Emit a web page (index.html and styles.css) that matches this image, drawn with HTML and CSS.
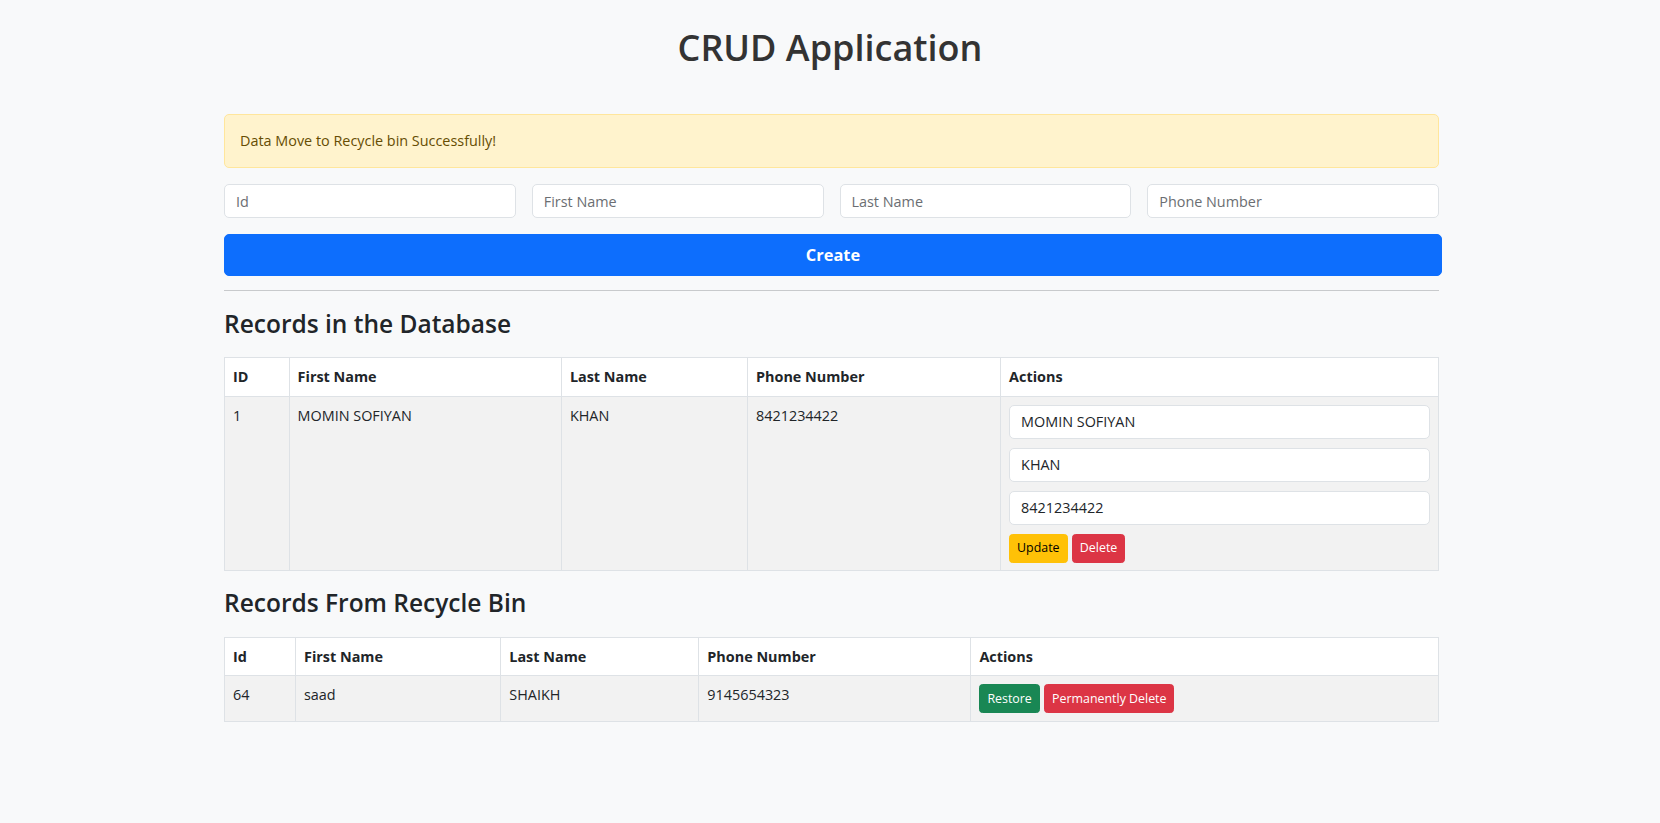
FILE: index.html
```html
<!DOCTYPE html>
<html lang="en">
<head>
<meta charset="utf-8">
<title>CRUD Application</title>
<link rel="stylesheet" href="styles.css">
</head>
<body>
<div class="page">
  <h1 class="title">CRUD Application</h1>
  <div class="container">
    <div class="alert">Data Move to Recycle bin Successfully!</div>
    <div class="form-row">
      <input class="field" type="text" placeholder="Id">
      <input class="field" type="text" placeholder="First Name">
      <input class="field" type="text" placeholder="Last Name">
      <input class="field" type="text" placeholder="Phone Number">
    </div>
    <button class="btn-create">Create</button>
    <hr class="divider">
    <h3 class="section-title">Records in the Database</h3>
    <table class="table">
      <colgroup>
        <col class="c1-id"><col class="c1-first"><col class="c1-last"><col class="c1-phone"><col class="c1-actions">
      </colgroup>
      <thead>
        <tr><th>ID</th><th>First Name</th><th>Last Name</th><th>Phone Number</th><th>Actions</th></tr>
      </thead>
      <tbody>
        <tr>
          <td>1</td>
          <td>MOMIN SOFIYAN</td>
          <td>KHAN</td>
          <td>8421234422</td>
          <td>
            <div class="edit-stack">
              <input class="field edit" type="text" value="MOMIN SOFIYAN">
              <input class="field edit" type="text" value="KHAN">
              <input class="field edit" type="text" value="8421234422">
              <div class="btn-row">
                <button class="btn-sm btn-warning">Update</button>
                <button class="btn-sm btn-danger">Delete</button>
              </div>
            </div>
          </td>
        </tr>
      </tbody>
    </table>
    <h3 class="section-title second">Records From Recycle Bin</h3>
    <table class="table">
      <colgroup>
        <col class="c2-id"><col class="c2-first"><col class="c2-last"><col class="c2-phone"><col class="c2-actions">
      </colgroup>
      <thead>
        <tr><th>Id</th><th>First Name</th><th>Last Name</th><th>Phone Number</th><th>Actions</th></tr>
      </thead>
      <tbody>
        <tr>
          <td>64</td>
          <td>saad</td>
          <td>SHAIKH</td>
          <td>9145654323</td>
          <td>
            <div class="btn-row">
              <button class="btn-sm btn-success">Restore</button>
              <button class="btn-sm btn-danger">Permanently Delete</button>
            </div>
          </td>
        </tr>
      </tbody>
    </table>
  </div>
</div>
</body>
</html>
```
FILE: styles.css
```css
* { box-sizing: border-box; }

html, body {
  margin: 0;
  padding: 0;
  background: #f8f9fa;
}

body {
  font-family: "Open Sans", "Noto Sans", sans-serif;
  font-size: 14.4px;
  line-height: 21.6px;
  color: #212529;
}

.page {
  padding-top: 26px;
  padding-bottom: 60px;
}

.title {
  margin: 0;
  text-align: center;
  font-size: 36px;
  line-height: 44px;
  font-weight: 600;
  color: #333333;
}

.container {
  width: 1218px;
  margin: 44px auto 0;
  padding-left: 3px;
}

.alert {
  height: 54px;
  padding: 15.2px 15px;
  background: #fff3cd;
  border: 1px solid #ffe69c;
  border-radius: 5px;
  color: #664d03;
}

.form-row {
  margin-top: 16px;
  display: grid;
  grid-template-columns: repeat(4, 1fr);
  gap: 16px;
}

.field {
  display: block;
  width: 100%;
  height: 34px;
  padding: 5.4px 11px;
  font-family: inherit;
  font-size: 14.4px;
  line-height: 21.6px;
  color: #212529;
  background: #ffffff;
  border: 1px solid #dee2e6;
  border-radius: 5px;
  outline: none;
}

.field::placeholder {
  color: #6b6e72;
}

.btn-create {
  display: block;
  margin-top: 16px;
  width: calc(100% + 3px);
  height: 41.5px;
  background: #0d6efd;
  color: #ffffff;
  border: 1px solid #0d6efd;
  border-radius: 5px;
  font-family: inherit;
  font-size: 16.4px;
  font-weight: 700;
  line-height: 24px;
  padding: 0;
}

.divider {
  margin: 14.5px 0 0;
  border: 0;
  border-top: 1px solid #c8cacc;
  height: 0;
}

.section-title {
  margin: 18px 0 0;
  font-size: 24.5px;
  line-height: 30px;
  font-weight: 600;
  color: #212529;
}

.section-title.second {
  margin-top: 17.5px;
}

.table {
  margin-top: 18px;
  width: 100%;
  border-collapse: collapse;
  table-layout: fixed;
  border: 1px solid #dee2e6;
}

.section-title.second + .table {
  margin-top: 18.8px;
}

.c1-id { width: 64.6px; }
.c1-first { width: 272.3px; }
.c1-last { width: 186.1px; }
.c1-phone { width: 253.1px; }
.c1-actions { width: auto; }

.c2-id { width: 71px; }
.c2-first { width: 205.3px; }
.c2-last { width: 198px; }
.c2-phone { width: 272.1px; }
.c2-actions { width: auto; }

.table th,
.table td {
  border: 1px solid #dee2e6;
  padding: 8px 8px;
  text-align: left;
  vertical-align: top;
  line-height: 21.6px;
}

.table th {
  background: #ffffff;
  font-weight: 700;
  color: #212529;
}

.table td {
  background: #f2f2f2;
  color: #212529;
}

.edit-stack {
  display: flex;
  flex-direction: column;
  gap: 8.5px;
  margin-bottom: -1px;
}

.field.edit {
  height: 34.5px;
}

.btn-row {
  display: flex;
  gap: 4.3px;
}

.btn-sm {
  height: 29px;
  padding: 0 7px;
  font-family: inherit;
  font-size: 12.4px;
  line-height: 18.9px;
  border-radius: 3.6px;
  border: 1px solid transparent;
  cursor: pointer;
}

.btn-warning {
  background: #ffc107;
  border-color: #ffc107;
  color: #000000;
}

.btn-danger {
  background: #dc3545;
  border-color: #dc3545;
  color: #ffffff;
}

.btn-success {
  background: #198754;
  border-color: #198754;
  color: #ffffff;
}
```
